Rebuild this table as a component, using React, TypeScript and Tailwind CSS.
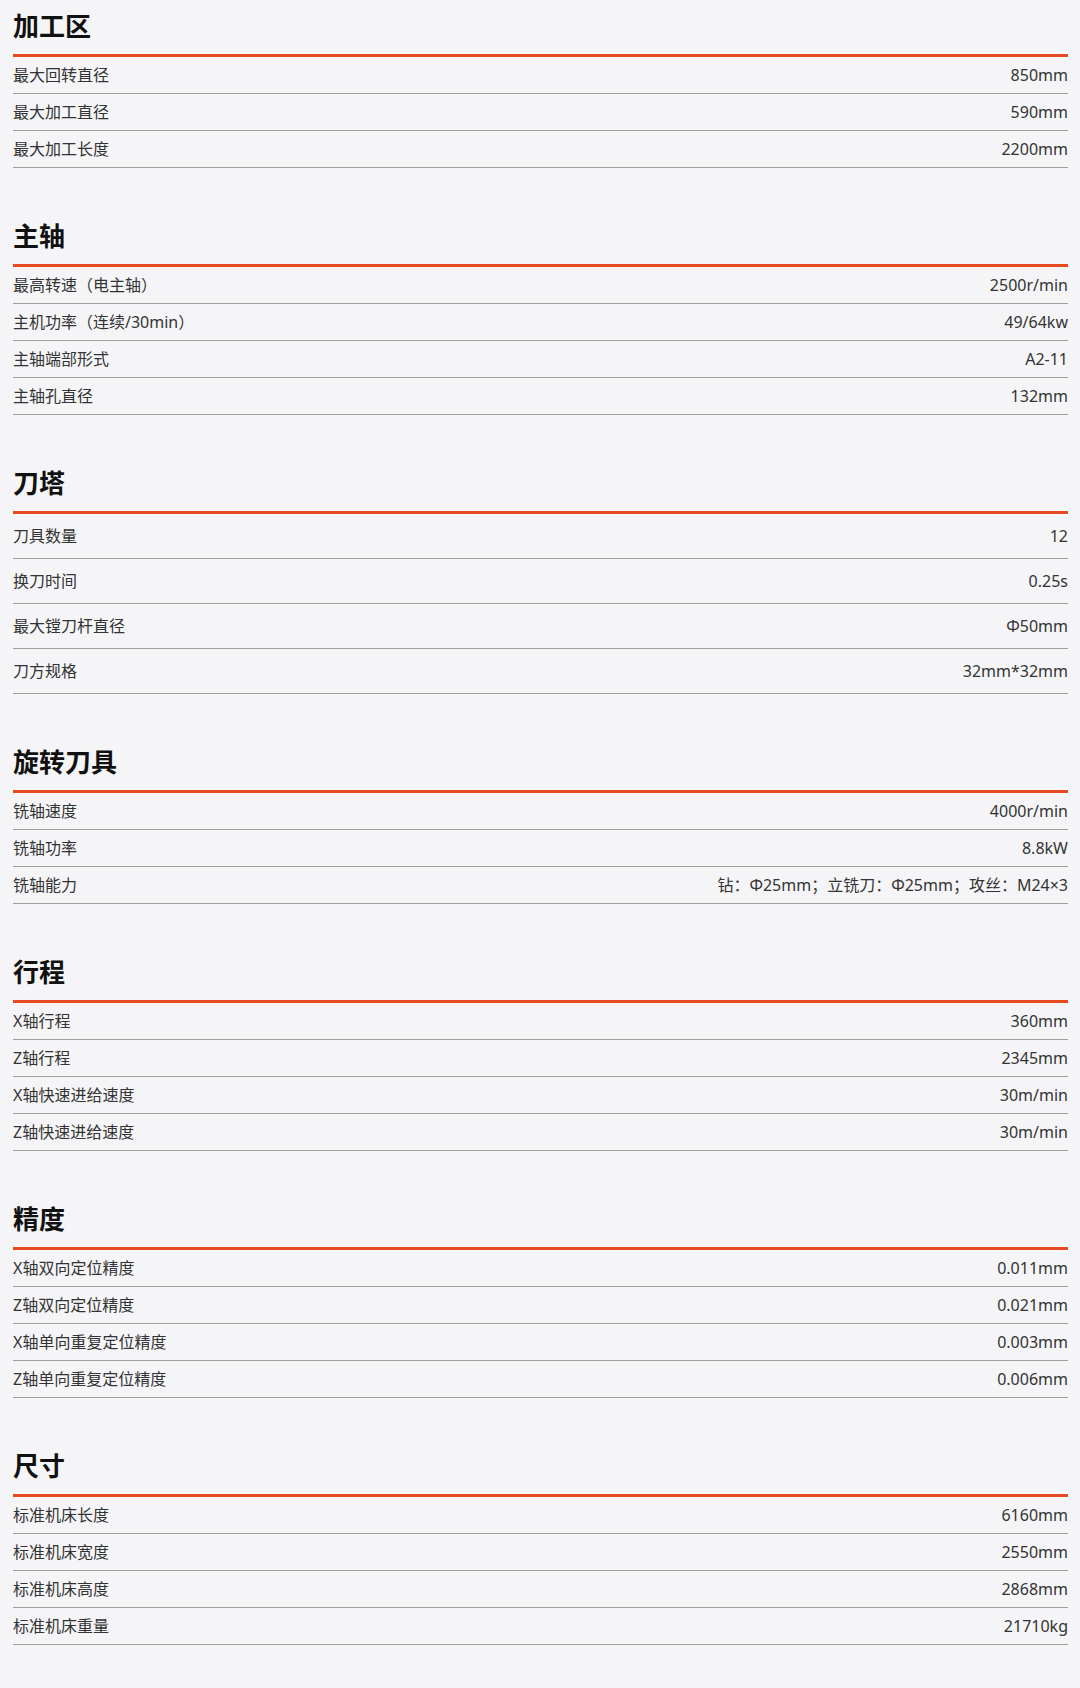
import React from "react";

type Section = { title: string; tall?: boolean; rows: [string, string][] };

const sections: Section[] = [
  {
    title: "加工区",
    rows: [
      ["最大回转直径", "850mm"],
      ["最大加工直径", "590mm"],
      ["最大加工长度", "2200mm"],
    ],
  },
  {
    title: "主轴",
    rows: [
      ["最高转速（电主轴）", "2500r/min"],
      ["主机功率（连续/30min）", "49/64kw"],
      ["主轴端部形式", "A2-11"],
      ["主轴孔直径", "132mm"],
    ],
  },
  {
    title: "刀塔",
    tall: true,
    rows: [
      ["刀具数量", "12"],
      ["换刀时间", "0.25s"],
      ["最大镗刀杆直径", "Φ50mm"],
      ["刀方规格", "32mm*32mm"],
    ],
  },
  {
    title: "旋转刀具",
    rows: [
      ["铣轴速度", "4000r/min"],
      ["铣轴功率", "8.8kW"],
      ["铣轴能力", "钻：Φ25mm；立铣刀：Φ25mm；攻丝：M24×3"],
    ],
  },
  {
    title: "行程",
    rows: [
      ["X轴行程", "360mm"],
      ["Z轴行程", "2345mm"],
      ["X轴快速进给速度", "30m/min"],
      ["Z轴快速进给速度", "30m/min"],
    ],
  },
  {
    title: "精度",
    rows: [
      ["X轴双向定位精度", "0.011mm"],
      ["Z轴双向定位精度", "0.021mm"],
      ["X轴单向重复定位精度", "0.003mm"],
      ["Z轴单向重复定位精度", "0.006mm"],
    ],
  },
  {
    title: "尺寸",
    rows: [
      ["标准机床长度", "6160mm"],
      ["标准机床宽度", "2550mm"],
      ["标准机床高度", "2868mm"],
      ["标准机床重量", "21710kg"],
    ],
  },
];

export default function App() {
  return (
    <div
      className="min-h-screen w-[1080px] bg-[#f5f5f7] pl-[13px] pr-[12px] pb-[43px]"
      style={{ fontFamily: '"Noto Sans", "Noto Sans CJK SC", sans-serif' }}
    >
      {sections.map((s, i) => (
        <section key={s.title} className={i === 0 ? "" : "mt-[42px]"}>
          <h2
            className="h-[54px] pt-[7px] text-[26px] leading-[36px] font-bold text-[#111]"
            style={{ fontFamily: '"Noto Sans CJK SC", sans-serif' }}
          >
            {s.title}
          </h2>
          <div className="h-[3px] bg-[#e8491d]" />
          {s.rows.map(([k, v]) => (
            <div
              key={k}
              className={`flex items-center justify-between border-b border-[#9e9e9e] text-[16px] text-[#333] ${
                s.tall ? "h-[45px]" : "h-[37px]"
              }`}
            >
              <span>{k}</span>
              <span>{v}</span>
            </div>
          ))}
        </section>
      ))}
    </div>
  );
}
